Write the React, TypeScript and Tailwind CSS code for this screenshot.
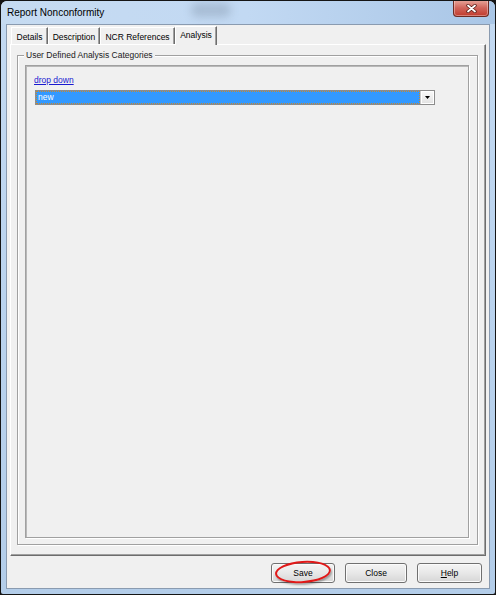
import React from "react";

function Tab({ label, w, selected }: { label: string; w: string; selected?: boolean }) {
  if (selected) {
    return (
      <div
        className={`${w} h-[19px] border-t border-l border-white border-r border-r-[#6d6d6d] shadow-[inset_-1px_0_0_#a0a0a0] flex items-start justify-center pt-[3px] -mb-px bg-[#f0f0f0] relative z-10`}
      >
        <span className="leading-[11px]">{label}</span>
      </div>
    );
  }
  return (
    <div
      className={`${w} h-[17px] border-t border-l border-white border-r border-r-[#6d6d6d] shadow-[inset_-1px_0_0_#a0a0a0] flex items-start justify-center pt-[4px]`}
    >
      <span className="leading-[11px]">{label}</span>
    </div>
  );
}

function Button({ children, w }: { children: React.ReactNode; w: string }) {
  return (
    <div
      className={`${w} h-[20px] rounded-[3px] border border-[#707070] bg-gradient-to-b from-[#f4f4f4] via-[#e8e8e8] to-[#d6d6d6] shadow-[inset_0_0_0_1px_#fbfbfb] flex items-center justify-center`}
    >
      <span className="leading-[11px]">{children}</span>
    </div>
  );
}

export default function App() {
  return (
    <div className="w-[496px] h-[595px] bg-[#151515] p-px font-['Liberation_Sans',Arial,sans-serif] text-[8.5px] text-black">
      <div className="h-full flex flex-col rounded-t-[6px] rounded-b-[2px] bg-gradient-to-b from-[#c4daf2] via-[#bad3ee] to-[#b3cde9] overflow-hidden">
        {/* Title bar */}
        <div className="h-[23px] flex items-start justify-between pl-[6px] pr-[6px] relative bg-gradient-to-r from-[#c6dbf1] via-[#c2d9f3] to-[#a9c6e6]">
          <div className="absolute left-[190px] top-[2px] w-[40px] h-[14px] rounded-full bg-[#7f92a8] opacity-40 blur-[4px]" />
          <span className="mt-[6px] text-[10px] leading-[12px] relative">Report Nonconformity</span>
          <div className="-mt-px w-[36px] h-[17px] rounded-b-[4px] border border-t-0 border-[#6e2a22] bg-gradient-to-b from-[#e8a79d] via-[#d0635a] to-[#c0392b] flex items-center justify-center relative shadow-[inset_0_0_0_1px_rgba(255,255,255,0.35)]">
            <svg width="11" height="9" viewBox="0 0 11 9">
              <path d="M2 1.5 L9 7.5 M9 1.5 L2 7.5" stroke="#5a1d16" strokeWidth="3.4" strokeLinecap="round" />
              <path d="M2 1.5 L9 7.5 M9 1.5 L2 7.5" stroke="#ffffff" strokeWidth="1.8" strokeLinecap="round" />
            </svg>
          </div>
        </div>

        {/* Client area */}
        <div className="flex-1 mx-[5px] mb-[5px] border border-[#8a9bb0] bg-[#f0f0f0] flex flex-col">
          {/* Tabs */}
          <div className="flex items-end pt-[2px] pl-[4px] h-[19px]">
            <Tab label="Details" w="w-[37px]" />
            <Tab label="Description" w="w-[52px]" />
            <Tab label="NCR References" w="w-[75px]" />
            <Tab label="Analysis" w="w-[42px]" selected />
          </div>

          {/* Tab panel */}
          <div className="ml-[3px] mr-[3px] h-[512px] border border-t-white border-l-white border-r-[#6d6d6d] border-b-[#6d6d6d] shadow-[inset_-1px_-1px_0_#a0a0a0] flex flex-col pt-[10px] pl-[6px] pr-[7px] pb-[10px]">
            {/* Group box */}
            <div className="flex-1 relative border border-[#a0a0a0] shadow-[inset_1px_1px_0_#ffffff,1px_1px_0_#ffffff] flex flex-col pt-[9px] pl-[7px] pr-[8px] pb-[6px]">
              <span className="absolute -top-[6px] left-[6px] px-[2px] bg-[#f0f0f0] leading-[11px] text-[#202020]">
                User Defined Analysis Categories
              </span>
              {/* Inner sunken box */}
              <div className="flex-1 border border-[#a0a0a0] shadow-[inset_1px_1px_0_#b8b8b8,1px_1px_0_#ffffff] flex flex-col pt-[9px] pl-[8px]">
                <span className="leading-[11px] text-[#1a1ad0] underline self-start">drop down</span>
                <div className="mt-[4px] ml-[1px] w-[400px] h-[15px] border border-[#8c8c8c] bg-white flex">
                  <div className="flex-1 bg-[#3399ff] border border-dotted border-[#c8882e] flex items-center pl-[1px]">
                    <span className="text-white leading-[11px]">new</span>
                  </div>
                  <div className="w-[14px] h-full border-l border-[#c8c8c8] bg-gradient-to-b from-[#fafafa] to-[#e2e2e2] shadow-[inset_0_0_0_1px_#ffffff] flex items-center justify-center">
                    <svg width="5" height="3" viewBox="0 0 5 3">
                      <path d="M0 0 L5 0 L2.5 3 Z" fill="#000000" />
                    </svg>
                  </div>
                </div>
              </div>
            </div>
          </div>

          {/* Footer */}
          <div className="flex-1 flex items-start justify-end pt-[7px] pr-[7px] gap-[10px]">
            <div className="relative">
              <Button w="w-[64px]">Save</Button>
              <div className="absolute left-[4px] -top-[2px] w-[56px] h-[22px] rounded-[50%] border-2 border-[#e01818] -rotate-[4deg] shadow-[1px_2px_2px_rgba(0,0,0,0.3)] pointer-events-none" />
            </div>
            <Button w="w-[62px]">Close</Button>
            <Button w="w-[65px]">
              <span className="underline">H</span>elp
            </Button>
          </div>
        </div>
      </div>
    </div>
  );
}
